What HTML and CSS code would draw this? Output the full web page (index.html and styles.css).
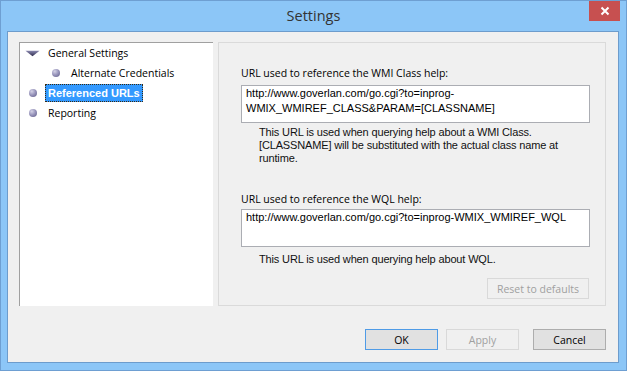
FILE: index.html
```html
<!DOCTYPE html>
<html lang="en">
<head>
  <meta charset="UTF-8">
  <title>Settings</title>
  <link rel="stylesheet" href="styles.css">
</head>
<body>
  <div class="window">
    <div class="titlebar">
      <span class="title">Settings</span>
      <button class="close-btn" title="Close">
        <svg viewBox="0 0 10 10" width="10" height="10">
          <path d="M1.5 1.5l7 7M8.5 1.5l-7 7" stroke="#fff" stroke-width="2"/>
        </svg>
      </button>
    </div>
    <div class="client">
      <div class="main">
        <ul class="tree">
          <li class="node">
            <span class="node-icon">
              <svg viewBox="0 0 16 7" width="16" height="7">
                <defs>
                  <linearGradient id="tri" x1="0" y1="0" x2="0" y2="1">
                    <stop offset="0" stop-color="#8a88b0"/>
                    <stop offset="1" stop-color="#2e2c4c"/>
                  </linearGradient>
                </defs>
                <path d="M0.5 0.5h15L8 6.5z" fill="url(#tri)"/>
              </svg>
            </span>
            <span class="node-label">General Settings</span>
          </li>
          <li class="node child">
            <span class="node-icon"><i class="bullet"></i></span>
            <span class="node-label">Alternate Credentials</span>
          </li>
          <li class="node">
            <span class="node-icon"><i class="bullet"></i></span>
            <span class="node-label selected">Referenced URLs</span>
          </li>
          <li class="node">
            <span class="node-icon"><i class="bullet"></i></span>
            <span class="node-label">Reporting</span>
          </li>
        </ul>
        <div class="panel">
          <label class="field-label">URL used to reference the WMI Class help:</label>
          <div class="field">http://www.goverlan.com/go.cgi?to=inprog-WMIX_WMIREF_CLASS&amp;PARAM=[CLASSNAME]</div>
          <p class="hint">This URL is used when querying help about a WMI Class. [CLASSNAME] will be substituted with the actual class name at runtime.</p>

          <label class="field-label second">URL used to reference the WQL help:</label>
          <div class="field">http://www.goverlan.com/go.cgi?to=inprog-WMIX_WMIREF_WQL</div>
          <p class="hint second">This URL is used when querying help about WQL.</p>

          <button class="btn reset" disabled>Reset to defaults</button>
        </div>
      </div>
      <div class="actions">
        <button class="btn default">OK</button>
        <button class="btn" disabled>Apply</button>
        <button class="btn cancel">Cancel</button>
      </div>
    </div>
  </div>
</body>
</html>
```

FILE: styles.css
```css
* { box-sizing: border-box; }

body {
  margin: 0;
  font-family: "Open Sans", "Liberation Sans", sans-serif;
  font-size: 10.5px;
  color: #000;
}

.window {
  width: 627px; height: 371px;
  border: 1px solid #6e9fd2;
  background: #8cc6f7;
  display: flex; flex-direction: column;
}

/* caption */
.titlebar {
  height: 30px; flex: none;
  display: grid;
  grid-template-columns: 1fr auto 1fr;
  align-items: start;
}
.title {
  grid-column: 2;
  line-height: 30px;
  font-size: 14.5px;
  color: #333;
}
.close-btn {
  grid-column: 3; justify-self: end;
  margin-right: 6px;
  width: 31px; height: 20px;
  padding: 0; border: 0;
  background: #c75050;
  display: flex; align-items: center; justify-content: center;
}

.client {
  flex: 1;
  margin: 0 7px 7px 6px;
  border: 1px solid #6d9ccc;
  background: #f0f0f0;
  padding: 10px 12px 12px 11px;
  display: flex; flex-direction: column;
}
.main { display: flex; gap: 5px; height: 264px; }

/* tree */
.tree {
  width: 194px; margin: 0; padding: 0;
  list-style: none;
  background: #fff;
  border-top: 1px solid #a0a0a0;
  border-left: 1px solid #a0a0a0;
}
.node {
  height: 20px;
  display: flex; align-items: center;
  padding-left: 5px;
}
.node.child { padding-left: 28px; }
.node-icon {
  width: 15px; height: 15px;
  display: flex; align-items: center; justify-content: center;
}
.bullet {
  width: 8px; height: 8px; border-radius: 50%;
  background: radial-gradient(circle at 35% 30%, #d4d2e6 0%, #9a97bd 45%, #5d5a86 100%);
}
.node-label {
  margin-left: 5px;
  padding: 0 2px;
  line-height: 16px;
  border: 1px solid transparent;
  white-space: nowrap;
}
.node-label.selected {
  background: #3399ff;
  color: #fff;
  font-family: "Liberation Sans", Arial, sans-serif;
  font-size: 11px;
  font-weight: bold;
  border: 1px dotted #3a2a10;
}

/* right group */
.panel {
  flex: 1;
  border: 1px solid #dadada;
  padding: 22px 15px 0 22px;
  display: flex; flex-direction: column;
}
.field-label { line-height: 16px; }
.field-label.second { margin-top: 26px; }
.field {
  margin-top: 4px;
  height: 38px;
  border: 1px solid #abadb3;
  background: #fff;
  padding: 0 4px;
  font-family: "Liberation Sans", Arial, sans-serif;
  font-size: 11px;
  line-height: 15px;
}
.field-label.second + .field { margin-top: 2px; }
.hint {
  margin: 3px 0 0 18px;
  max-width: 310px;
  font-family: "Liberation Sans", Arial, sans-serif;
  font-size: 11px;
  line-height: 13px;
  letter-spacing: -0.15px;
  color: #111;
}
.hint.second { margin-top: 6px; }

/* buttons */
.btn {
  width: 73px; height: 21px;
  padding: 0;
  font: inherit;
  color: #000;
  background: #e1e1e1;
  border: 1px solid #adadad;
}
.btn:disabled {
  color: #a0a0a0;
  background: #f0f0f0;
  border-color: #d9d9d9;
}
.btn.default { border-color: #4f9be6; }
.btn.reset {
  width: 102px;
  margin: 12px 1px 0 auto;
}
.actions {
  margin-top: 23px;
  display: flex; justify-content: flex-end; gap: 8px;
}
.btn.cancel { margin-left: 6px; }
```
